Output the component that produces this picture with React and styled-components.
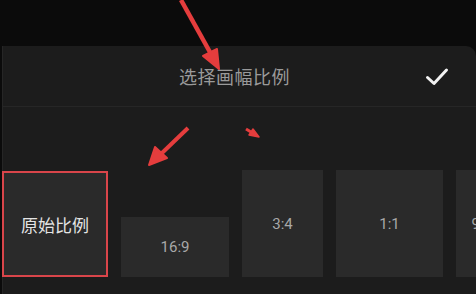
import React from "react";
import styled, { createGlobalStyle } from "styled-components";

const ratios = [
  { label: "原始比例", w: 106, h: 106, active: true },
  { label: "16:9", w: 108, h: 60 },
  { label: "3:4", w: 81, h: 107 },
  { label: "1:1", w: 107, h: 107 },
  { label: "9:16", w: 60, h: 107 },
];

function App() {
  return (
    <Screen>
      <GlobalStyle />
      <TopArea />
      <Sheet>
        <Header>
          <Title>选择画幅比例</Title>
          <Confirm>
            <svg width="24" height="20" viewBox="0 0 24 20">
              <path
                d="M2.5 10.5 L9 16.5 L21.5 3"
                fill="none"
                stroke="#f2f2f2"
                strokeWidth="3"
                strokeLinecap="round"
                strokeLinejoin="round"
              />
            </svg>
          </Confirm>
        </Header>
        <RatioRow>
          {ratios.map((r) => (
            <RatioTile
              key={r.label}
              $active={r.active}
              style={{ width: r.w, height: r.h }}
            >
              {r.label}
            </RatioTile>
          ))}
        </RatioRow>
      </Sheet>
      <Arrows width="476" height="294" viewBox="0 0 476 294">
        <g fill="#e53d3d" stroke="#e53d3d" strokeLinejoin="round">
          <line x1="181" y1="0" x2="211" y2="54" strokeWidth="4.5" />
          <polygon points="219,69 203,56 217,49" strokeWidth="2" />
          <line x1="188" y1="128" x2="162" y2="153" strokeWidth="4" />
          <polygon points="149,165 155,147 167,158" strokeWidth="2" />
          <line x1="246" y1="129" x2="251" y2="132" strokeWidth="3" />
          <polygon points="259,137 249,135 253,129" strokeWidth="1.5" />
        </g>
      </Arrows>
    </Screen>
  );
}

const GlobalStyle = createGlobalStyle`
  html, body {
    margin: 0;
    padding: 0;
    background: #0b0b0b;
    overflow: hidden;
  }
`;

const Screen = styled.div`
  position: relative;
  width: 476px;
  height: 294px;
  display: flex;
  flex-direction: column;
  background: #0b0b0b;
  font-family: Roboto, "Noto Sans CJK SC", sans-serif;
  overflow: hidden;
`;

const TopArea = styled.div`
  height: 46px;
  flex-shrink: 0;
`;

const Sheet = styled.div`
  flex: 1;
  margin-left: 2px;
  background: #1c1c1c;
  border-top-right-radius: 10px;
  border-left: 1px solid #262626;
  display: flex;
  flex-direction: column;
`;

const Header = styled.div`
  height: 60px;
  flex-shrink: 0;
  border-bottom: 1px solid #262626;
  display: flex;
  align-items: center;
  justify-content: center;
  position: relative;
`;

const Title = styled.div`
  font-family: "Noto Sans CJK SC", sans-serif;
  font-size: 18px;
  color: #9a9a9a;
  letter-spacing: 0.5px;
  margin-left: -10px;
`;

const Confirm = styled.div`
  position: absolute;
  right: 27px;
  top: 21px;
  display: flex;
`;

const RatioRow = styled.div`
  flex: 1;
  display: flex;
  align-items: flex-end;
  gap: 13px;
  padding-bottom: 17px;
  margin-left: -1px;
`;

const RatioTile = styled.div`
  box-sizing: border-box;
  flex-shrink: 0;
  display: flex;
  align-items: center;
  justify-content: center;
  background: #2a2a2a;
  border: ${(p) => (p.$active ? "2px solid #d9454a" : "none")};
  color: ${(p) => (p.$active ? "#e4e4e4" : "#a8a8a8")};
  font-family: ${(p) =>
    p.$active ? '"Noto Sans CJK SC", sans-serif' : 'Roboto, sans-serif'};
  font-size: ${(p) => (p.$active ? "17px" : "15px")};
`;

const Arrows = styled.svg`
  position: absolute;
  left: 0;
  top: 0;
  pointer-events: none;
`;

export default App;
